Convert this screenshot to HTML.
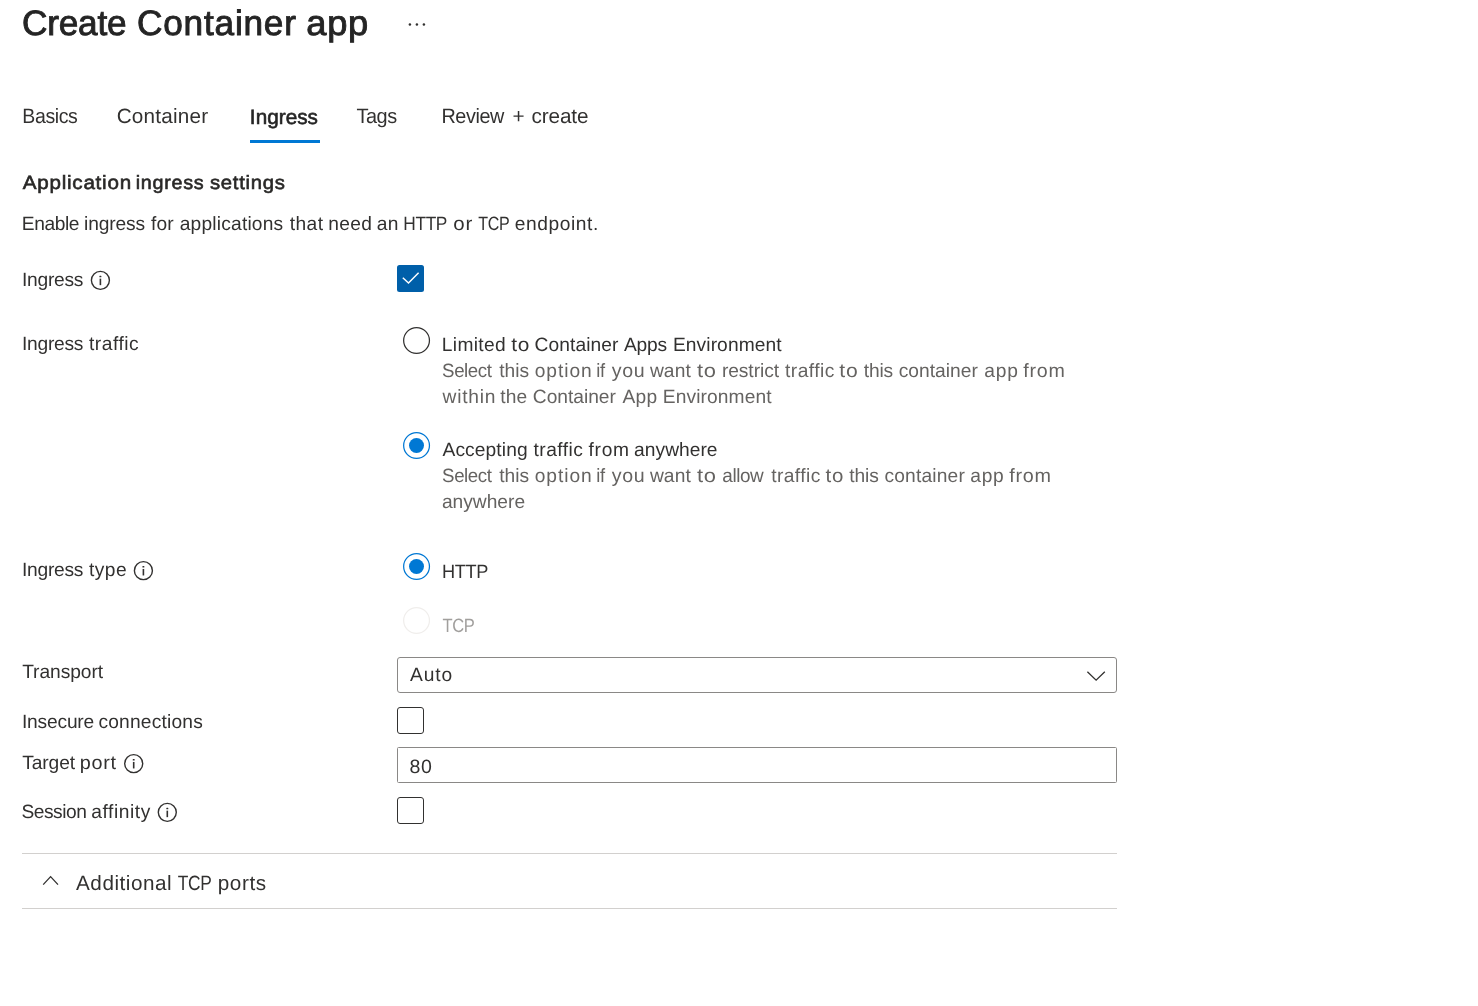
<!DOCTYPE html>
<html lang="en">
<head>
<meta charset="utf-8">
<title>Create Container app</title>
<style>
html,body{margin:0;padding:0;background:#fff}
body{width:1478px;height:1006px;overflow:hidden;font-family:"Liberation Sans",sans-serif;font-weight:400;font-variant-ligatures:none;text-rendering:geometricPrecision}
#page{position:relative;width:1478px;height:1006px;overflow:hidden;will-change:transform}
.ln{position:absolute;left:0;width:1478px;margin:0;padding:0;white-space:pre;font-weight:400;display:block}
.t{position:absolute;top:0;white-space:pre;display:block;transform-origin:0 50%}
.abs{position:absolute;box-sizing:border-box}
svg{position:absolute;overflow:visible}
</style>
</head>
<body>
<div id="page">
<!-- title ellipsis -->
<svg style="left:408px;top:22px" width="18" height="4" viewBox="0 0 18 4" aria-label="More"><circle cx="1.9" cy="2.45" r="1.25" fill="#323130"/><circle cx="8.9" cy="2.45" r="1.25" fill="#323130"/><circle cx="15.9" cy="2.45" r="1.25" fill="#323130"/></svg>
<!-- active tab underline -->
<div class="abs" style="left:250px;top:140px;width:70px;height:3px;background:#0078d4"></div>
<!-- info icons -->
<svg class="info" style="left:90px;top:270px" width="21" height="21" viewBox="0 0 21 21"><circle cx="10.4" cy="10.35" r="9" fill="none" stroke="#323130" stroke-width="1.4"/><rect x="9.6" y="8.65" width="1.6" height="6.5" fill="#323130"/><rect x="9.40" y="5.65" width="2" height="1.5" rx="0.5" fill="#323130"/></svg>
<svg class="info" style="left:133px;top:560px" width="21" height="21" viewBox="0 0 21 21"><circle cx="10.4" cy="10.65" r="9" fill="none" stroke="#323130" stroke-width="1.4"/><rect x="9.6" y="8.95" width="1.6" height="6.5" fill="#323130"/><rect x="9.40" y="5.95" width="2" height="1.5" rx="0.5" fill="#323130"/></svg>
<svg class="info" style="left:123px;top:753px" width="21" height="21" viewBox="0 0 21 21"><circle cx="10.7" cy="10.65" r="9" fill="none" stroke="#323130" stroke-width="1.4"/><rect x="9.9" y="8.95" width="1.6" height="6.5" fill="#323130"/><rect x="9.70" y="5.95" width="2" height="1.5" rx="0.5" fill="#323130"/></svg>
<svg class="info" style="left:157px;top:802px" width="21" height="21" viewBox="0 0 21 21"><circle cx="10.3" cy="10.35" r="9" fill="none" stroke="#323130" stroke-width="1.4"/><rect x="9.5" y="8.65" width="1.6" height="6.5" fill="#323130"/><rect x="9.30" y="5.65" width="2" height="1.5" rx="0.5" fill="#323130"/></svg>
<!-- checked checkbox -->
<div class="abs" style="left:397px;top:265px;width:27px;height:27px;border-radius:2.5px;background:#005fa9"></div>
<svg style="left:397px;top:265px" width="27" height="27" viewBox="0 0 27 27"><path d="M5.8 12.7 L11.5 18.0 L21.6 7.7" fill="none" stroke="#fff" stroke-width="1.45"/></svg>
<!-- radios -->
<svg style="left:403px;top:327px" width="27" height="27" viewBox="0 0 27 27"><circle cx="13.55" cy="13.5" r="12.9" fill="#fff" stroke="#323130" stroke-width="1.25"/></svg>
<svg style="left:403px;top:432px" width="27" height="27" viewBox="0 0 27 27"><circle cx="13.55" cy="13.5" r="12.9" fill="#fff" stroke="#0078d4" stroke-width="1.25"/></svg>
<div class="abs" style="left:409px;top:438px;width:15px;height:15px;border-radius:50%;background:#0078d4"></div>
<svg style="left:403px;top:553px" width="27" height="27" viewBox="0 0 27 27"><circle cx="13.55" cy="13.5" r="12.9" fill="#fff" stroke="#0078d4" stroke-width="1.25"/></svg>
<div class="abs" style="left:409px;top:559px;width:15px;height:15px;border-radius:50%;background:#0078d4"></div>
<svg style="left:403px;top:607px" width="27" height="27" viewBox="0 0 27 27"><circle cx="13.55" cy="13.5" r="12.9" fill="#fff" stroke="#f0eeec" stroke-width="1.25"/></svg>
<!-- select -->
<div class="abs" style="left:397px;top:657px;width:720px;height:35.5px;border:1.5px solid #8a8886;border-radius:3px;background:#fff"></div>
<svg style="left:1086px;top:670px" width="20" height="12" viewBox="0 0 20 12"><path d="M1.4 1.7 L10.1 10.1 L18.8 1.7" fill="none" stroke="#323130" stroke-width="1.3"/></svg>
<!-- unchecked checkboxes -->
<div class="abs" style="left:397px;top:707px;width:27px;height:27px;border-radius:3px;border:1.5px solid #323130;background:#fff"></div>
<div class="abs" style="left:397px;top:797px;width:27px;height:27px;border-radius:3px;border:1.5px solid #323130;background:#fff"></div>
<!-- input -->
<div class="abs" style="left:397px;top:747px;width:720px;height:35.5px;border:1.5px solid #8a8886;border-radius:1.5px;background:#fff"></div>
<!-- accordion -->
<div class="abs" style="left:22px;top:853px;width:1095px;height:1px;background:#d2d0ce"></div>
<svg style="left:42px;top:875px" width="18" height="11" viewBox="0 0 18 11"><path d="M1.2 9.6 L8.6 1.6 L16 9.6" fill="none" stroke="#323130" stroke-width="1.3"/></svg>
<div class="abs" style="left:22px;top:908px;width:1095px;height:1px;background:#d2d0ce"></div>
<h1 class="ln" id="title" style="top:1px;font-size:35.2px;line-height:46px;color:#242424;-webkit-text-stroke:0.9px #242424"><span class="t" id="title_0" style="left:21.98px;letter-spacing:-0.188px">Create</span> <span class="t" id="title_1" style="left:136.99px;letter-spacing:0.799px">Container</span> <span class="t" id="title_2" style="left:306px;letter-spacing:0.700px;transform:translateX(0.27px) scaleX(1.0311)">app</span></h1>
<div class="ln" id="tab1" style="top:103px;font-size:20.7px;line-height:27px;color:#323130"><span class="t" id="tab1_0" style="left:22px;letter-spacing:-0.420px;transform:translateX(0.34px) scaleX(0.9422)">Basics</span></div>
<div class="ln" id="tab2" style="top:103px;font-size:20.7px;line-height:27px;color:#323130"><span class="t" id="tab2_0" style="left:116.64px;letter-spacing:0.236px">Container</span></div>
<div class="ln" id="tab3" style="top:104px;font-size:20.7px;line-height:27px;color:#242424;-webkit-text-stroke:0.6px #242424"><span class="t" id="tab3_0" style="left:249.87px;letter-spacing:0.040px">Ingress</span></div>
<div class="ln" id="tab4" style="top:103px;font-size:20.7px;line-height:27px;color:#323130"><span class="t" id="tab4_0" style="left:356px;letter-spacing:-0.420px;transform:translateX(0.42px) scaleX(0.9611)">Tags</span></div>
<div class="ln" id="tab5" style="top:103px;font-size:20.7px;line-height:27px;color:#323130"><span class="t" id="tab5_0" style="left:441px;letter-spacing:-0.420px;transform:translateX(0.45px) scaleX(0.9575)">Review</span> <span class="t" id="tab5_1" style="left:512.43px">+</span> <span class="t" id="tab5_2" style="left:531.41px;letter-spacing:-0.083px">create</span></div>
<h2 class="ln" id="h2" style="top:171px;font-size:19.2px;line-height:25px;color:#292827;-webkit-text-stroke:0.6px #292827"><span class="t" id="h2_0" style="left:22px;letter-spacing:0.700px;transform:translateX(0.76px) scaleX(1.0740)">Application</span> <span class="t" id="h2_1" style="left:135px;letter-spacing:0.700px;transform:translateX(0.75px) scaleX(1.0282)">ingress</span> <span class="t" id="h2_2" style="left:209px;letter-spacing:0.700px;transform:translateX(0.89px) scaleX(1.0567)">settings</span></h2>
<p class="ln" id="p1" style="top:212px;font-size:19.2px;line-height:25px;color:#323130"><span class="t" id="p1_0" style="left:21.86px;letter-spacing:-0.422px">Enable</span> <span class="t" id="p1_1" style="left:84.08px;letter-spacing:-0.125px">ingress</span> <span class="t" id="p1_2" style="left:151.06px;letter-spacing:0.039px">for</span> <span class="t" id="p1_3" style="left:179.74px;letter-spacing:0.193px">applications</span> <span class="t" id="p1_4" style="left:289.63px;letter-spacing:0.483px">that</span> <span class="t" id="p1_5" style="left:328.35px;letter-spacing:0.308px">need</span> <span class="t" id="p1_6" style="left:376.75px;letter-spacing:0.300px">an</span> <span class="t" id="p1_7" style="left:403px;letter-spacing:-0.420px;transform:translateX(0.37px) scaleX(0.9015)">HTTP</span> <span class="t" id="p1_8" style="left:453px;letter-spacing:0.700px;transform:translateX(0.34px) scaleX(1.0678)">or</span> <span class="t" id="p1_9" style="left:478px;letter-spacing:-0.420px;transform:translateX(0.20px) scaleX(0.8358)">TCP</span> <span class="t" id="p1_10" style="left:514.72px;letter-spacing:0.584px">endpoint.</span></p>
<label class="ln" id="l1" style="top:268px;font-size:19.2px;line-height:25px;color:#323130"><span class="t" id="l1_0" style="left:22.04px;letter-spacing:-0.272px">Ingress</span></label>
<label class="ln" id="l2" style="top:332px;font-size:19.2px;line-height:25px;color:#323130"><span class="t" id="l2_0" style="left:22.04px;letter-spacing:-0.272px">Ingress</span> <span class="t" id="l2_1" style="left:88.97px;letter-spacing:0.518px">traffic</span></label>
<label class="ln" id="r1" style="top:333px;font-size:19.2px;line-height:25px;color:#323130"><span class="t" id="r1_0" style="left:441.84px;letter-spacing:0.320px">Limited</span> <span class="t" id="r1_1" style="left:511px;letter-spacing:0.700px;transform:translateX(0.21px) scaleX(1.0870)">to</span> <span class="t" id="r1_2" style="left:534.48px;letter-spacing:0.100px">Container</span> <span class="t" id="r1_3" style="left:623.93px;letter-spacing:-0.175px">Apps</span> <span class="t" id="r1_4" style="left:672.95px;letter-spacing:0.094px">Environment</span></label>
<p class="ln" id="d1a" style="top:359px;font-size:19.2px;line-height:25px;color:#656361"><span class="t" id="d1a_0" style="left:442px;letter-spacing:-0.420px;transform:translateX(0.06px) scaleX(0.9748)">Select</span> <span class="t" id="d1a_1" style="left:499.22px;letter-spacing:0.026px">this</span> <span class="t" id="d1a_2" style="left:534.68px;letter-spacing:0.946px">option</span> <span class="t" id="d1a_3" style="left:596px;letter-spacing:-0.420px;transform:translateX(0.20px) scaleX(0.9581)">if</span> <span class="t" id="d1a_4" style="left:611px;letter-spacing:0.700px;transform:translateX(0.74px) scaleX(1.0210)">you</span> <span class="t" id="d1a_5" style="left:649.91px;letter-spacing:0.101px">want</span> <span class="t" id="d1a_6" style="left:696px;letter-spacing:0.700px;transform:translateX(0.93px) scaleX(1.1418)">to</span> <span class="t" id="d1a_7" style="left:721.93px;letter-spacing:-0.069px">restrict</span> <span class="t" id="d1a_8" style="left:785.05px;letter-spacing:0.449px">traffic</span> <span class="t" id="d1a_9" style="left:839px;letter-spacing:0.700px;transform:translateX(0.30px) scaleX(1.1020)">to</span> <span class="t" id="d1a_10" style="left:863.73px;letter-spacing:-0.152px">this</span> <span class="t" id="d1a_11" style="left:898.66px;letter-spacing:0.024px">container</span> <span class="t" id="d1a_12" style="left:984.27px;letter-spacing:0.760px">app</span> <span class="t" id="d1a_13" style="left:1023px;letter-spacing:0.700px;transform:translateX(0.37px) scaleX(1.0220)">from</span></p>
<p class="ln" id="d1b" style="top:385px;font-size:19.2px;line-height:25px;color:#656361"><span class="t" id="d1b_0" style="left:442.57px;letter-spacing:0.741px">within</span> <span class="t" id="d1b_1" style="left:500.13px;letter-spacing:0.187px">the</span> <span class="t" id="d1b_2" style="left:532.85px;letter-spacing:-0.027px">Container</span> <span class="t" id="d1b_3" style="left:622.46px;letter-spacing:0.297px">App</span> <span class="t" id="d1b_4" style="left:662.82px;letter-spacing:0.101px">Environment</span></p>
<label class="ln" id="r2" style="top:438px;font-size:19.2px;line-height:25px;color:#323130"><span class="t" id="r2_0" style="left:442.53px;letter-spacing:0.105px">Accepting</span> <span class="t" id="r2_1" style="left:533.58px;letter-spacing:0.447px">traffic</span> <span class="t" id="r2_2" style="left:588.42px;letter-spacing:0.761px">from</span> <span class="t" id="r2_3" style="left:634.11px;letter-spacing:0.030px">anywhere</span></label>
<p class="ln" id="d2a" style="top:464px;font-size:19.2px;line-height:25px;color:#656361"><span class="t" id="d2a_0" style="left:442px;letter-spacing:-0.420px;transform:translateX(0.06px) scaleX(0.9748)">Select</span> <span class="t" id="d2a_1" style="left:499.22px;letter-spacing:0.026px">this</span> <span class="t" id="d2a_2" style="left:534.68px;letter-spacing:0.946px">option</span> <span class="t" id="d2a_3" style="left:596px;letter-spacing:-0.420px;transform:translateX(0.20px) scaleX(0.9581)">if</span> <span class="t" id="d2a_4" style="left:611px;letter-spacing:0.700px;transform:translateX(0.74px) scaleX(1.0210)">you</span> <span class="t" id="d2a_5" style="left:649.91px;letter-spacing:0.101px">want</span> <span class="t" id="d2a_6" style="left:696px;letter-spacing:0.700px;transform:translateX(0.93px) scaleX(1.1418)">to</span> <span class="t" id="d2a_7" style="left:722px;letter-spacing:-0.420px;transform:translateX(0.27px) scaleX(0.9858)">allow</span> <span class="t" id="d2a_8" style="left:771.19px;letter-spacing:0.418px">traffic</span> <span class="t" id="d2a_9" style="left:825px;letter-spacing:0.700px;transform:translateX(0.51px) scaleX(1.0661)">to</span> <span class="t" id="d2a_10" style="left:849.16px;letter-spacing:-0.023px">this</span> <span class="t" id="d2a_11" style="left:884.45px;letter-spacing:0.183px">container</span> <span class="t" id="d2a_12" style="left:970.33px;letter-spacing:0.657px">app</span> <span class="t" id="d2a_13" style="left:1009px;letter-spacing:0.700px;transform:translateX(0.20px) scaleX(1.0306)">from</span></p>
<p class="ln" id="d2b" style="top:490px;font-size:19.2px;line-height:25px;color:#656361"><span class="t" id="d2b_0" style="left:441.89px;letter-spacing:0.004px">anywhere</span></p>
<label class="ln" id="l3" style="top:558px;font-size:19.2px;line-height:25px;color:#323130"><span class="t" id="l3_0" style="left:22.04px;letter-spacing:-0.272px">Ingress</span> <span class="t" id="l3_1" style="left:88.92px;letter-spacing:0.501px">type</span></label>
<label class="ln" id="r3" style="top:560px;font-size:19.2px;line-height:25px;color:#323130"><span class="t" id="r3_0" style="left:442px;letter-spacing:-0.420px;transform:translateX(0.10px) scaleX(0.9471)">HTTP</span></label>
<label class="ln" id="r4" style="top:614px;font-size:19.2px;line-height:25px;color:#a19f9d"><span class="t" id="r4_0" style="left:442px;letter-spacing:-0.420px;transform:translateX(0.41px) scaleX(0.8625)">TCP</span></label>
<label class="ln" id="l4" style="top:660px;font-size:19.2px;line-height:25px;color:#323130"><span class="t" id="l4_0" style="left:22.17px;letter-spacing:-0.059px">Transport</span></label>
<div class="ln" id="sel" style="top:663px;font-size:19.2px;line-height:25px;color:#323130"><span class="t" id="sel_0" style="left:410.09px;letter-spacing:0.852px">Auto</span></div>
<label class="ln" id="l5" style="top:710px;font-size:19.2px;line-height:25px;color:#323130"><span class="t" id="l5_0" style="left:21.95px;letter-spacing:-0.184px">Insecure</span> <span class="t" id="l5_1" style="left:98.42px;letter-spacing:0.202px">connections</span></label>
<label class="ln" id="l6" style="top:751px;font-size:19.2px;line-height:25px;color:#323130"><span class="t" id="l6_0" style="left:22.18px;letter-spacing:-0.090px">Target</span> <span class="t" id="l6_1" style="left:79px;letter-spacing:0.700px;transform:translateX(0.73px) scaleX(1.0338)">port</span></label>
<div class="ln" id="inp" style="top:755px;font-size:19.2px;line-height:25px;color:#323130"><span class="t" id="inp_0" style="left:409px;letter-spacing:0.700px;transform:translateX(0.46px) scaleX(1.0193)">80</span></div>
<label class="ln" id="l7" style="top:800px;font-size:19.2px;line-height:25px;color:#323130"><span class="t" id="l7_0" style="left:21.45px;letter-spacing:-0.464px">Session</span> <span class="t" id="l7_1" style="left:91.32px;letter-spacing:0.562px">affinity</span></label>
<h3 class="ln" id="acc" style="top:870px;font-size:20.7px;line-height:27px;color:#323130"><span class="t" id="acc_0" style="left:76.02px;letter-spacing:0.535px">Additional</span> <span class="t" id="acc_1" style="left:177px;letter-spacing:-0.420px;transform:translateX(0.76px) scaleX(0.8375)">TCP</span> <span class="t" id="acc_2" style="left:217.75px;letter-spacing:0.597px">ports</span></h3>
</div>
</body>
</html>
